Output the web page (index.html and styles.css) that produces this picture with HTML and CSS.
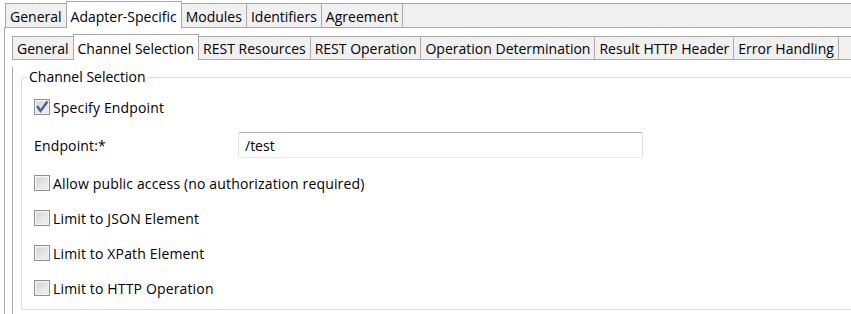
FILE: index.html
```html
<!DOCTYPE html>
<html>
<head>
	<meta charset="utf-8">
	<title>Channel Selection</title>
	<link rel="stylesheet" href="styles.css">
</head>
<body>

	<div class="tabs outer">
		<div class="tabbar">
			<span class="tab">General</span>
			<span class="tab sel">Adapter-Specific</span>
			<span class="tab">Modules</span>
			<span class="tab">Identifiers</span>
			<span class="tab">Agreement</span>
			<span class="tab fill"></span>
		</div>
		<div class="tabbody">

			<div class="tabs inner">
				<div class="tabbar">
					<span class="tab">General</span>
					<span class="tab sel">Channel Selection</span>
					<span class="tab">REST Resources</span>
					<span class="tab">REST Operation</span>
					<span class="tab">Operation Determination</span>
					<span class="tab">Result HTTP Header</span>
					<span class="tab">Error Handling</span>
					<span class="tab fill"></span>
				</div>
				<div class="tabbody">
					<fieldset class="group">
						<legend>Channel Selection</legend>
						<div class="rows">
							<label class="check"><span class="cb on"><svg width="14" height="14" viewBox="0 0 14 14"><polyline points="2,6 5.5,11 12.5,1.5" fill="none" stroke="#4a5f98" stroke-width="2.4"/></svg></span>Specify Endpoint</label>
							<div class="field">
								<label class="flabel" for="txtEndpoint">Endpoint:*</label>
								<input id="txtEndpoint" class="txt" type="text" value="/test">
							</div>
							<label class="check"><span class="cb"></span>Allow public access (no authorization required)</label>
							<label class="check"><span class="cb"></span>Limit to JSON Element</label>
							<label class="check"><span class="cb"></span>Limit to XPath Element</label>
							<label class="check"><span class="cb"></span>Limit to HTTP Operation</label>
						</div>
					</fieldset>
				</div>
			</div>

		</div>
	</div>

</body>
</html>
```

FILE: styles.css
```css
body {
	margin: 0;
	background: #fff;
	color: #000;
	font: 14px/20px "Open Sans", "Noto Sans", sans-serif;
	overflow: hidden;
}

.outer {
	margin-left: 4px;
}

/* tab strips */
.tabbar {
	display: flex;
	align-items: flex-end;
	border-bottom: 1px solid #a9a9a9;
}

.outer > .tabbar {
	height: 27px;
	padding-left: 1px;
}

.inner > .tabbar {
	height: 23px;
}

.tab {
	border: 1px solid #a9a9a9;
	border-bottom: none;
	background: #f0f0f0;
	margin-left: -1px;
	padding: 3px 4px 0;
	white-space: nowrap;
}

.tabbar .tab:first-child {
	margin-left: 0;
}

.inner .tab {
	padding: 2px 4px 0;
}

.tab.sel {
	position: relative;
	background: #fff;
	margin-bottom: -1px;
	padding: 5px 4px 1px;
}

.inner .tab.sel {
	padding: 4px 4px 1px;
}

.tab.fill {
	flex: 1;
	height: 20px;
	padding-left: 0;
	padding-right: 0;
	border-right: none;
}

/* tab pages */
.tabbody {
	border-left: 1px solid #a9a9a9;
	background: #fff;
}

.outer > .tabbody {
	padding: 8px 0 0 7px;
}

.inner > .tabbody {
	padding: 0 0 4px 8px;
}

/* group box */
.group {
	margin: 7px 0 0;
	padding: 0;
	border: 1px solid #d5dfe5;
	border-right: none;
	border-radius: 3px 0 0 3px;
}

.group legend {
	margin-left: 5px;
	padding: 0 2px;
	line-height: 20px;
}

.rows {
	display: flex;
	flex-direction: column;
	gap: 15px;
	padding: 10px 0 11px 12px;
	letter-spacing: 0.15px;
}

.check {
	display: flex;
	align-items: center;
	gap: 3px;
	box-sizing: border-box;
	height: 20px;
	padding-top: 1px;
	cursor: default;
}

.cb {
	width: 16px;
	height: 16px;
	box-sizing: border-box;
	margin-top: -1px;
	border: 1px solid #8f8f8f;
	background: linear-gradient(135deg, #cfcfcf, #f8f8f8);
	box-shadow: inset 0 0 0 1px #f4f4f4, inset 0 0 0 2px #e6e6e6;
}

.cb svg {
	display: block;
}

.field {
	display: flex;
	align-items: center;
	height: 26px;
}

.flabel {
	width: 204px;
	padding-top: 1px;
}

.txt {
	width: 405px;
	height: 26px;
	box-sizing: border-box;
	border: 1px solid;
	border-color: #abadb3 #dbdfe6 #e3e9ef #e2e3ea;
	border-radius: 2px;
	padding: 1px 6px 0;
	font: inherit;
	color: #000;
	outline: none;
}
```
